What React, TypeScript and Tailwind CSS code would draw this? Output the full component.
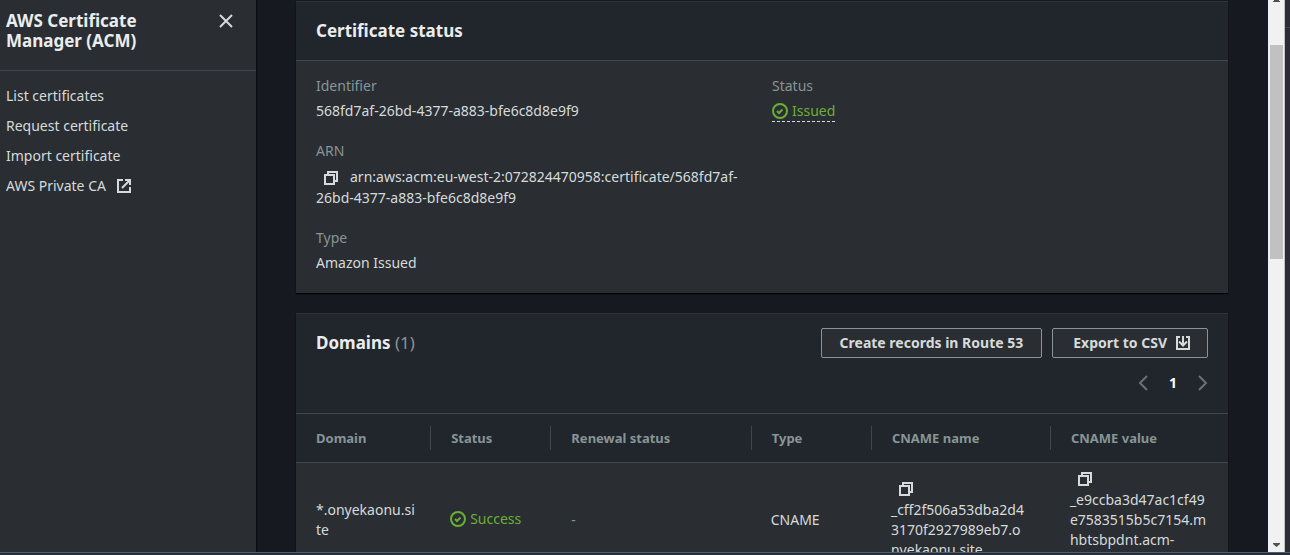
import type { ReactNode } from "react";

const records = [
  {
    domain: "*.onyekaonu.site",
    status: "Success",
    renewal: "-",
    type: "CNAME",
    name: "_cff2f506a53dba2d43170f2927989eb7.onyekaonu.site.",
    value: "_e9ccba3d47ac1cf49e7583515b5c7154.mhbtsbpdnt.acm-validations.aws.",
  },
];

const columns = [
  { label: "Domain", width: "w-[14.5%]" },
  { label: "Status", width: "w-[12.9%]" },
  { label: "Renewal status", width: "w-[21.5%]" },
  { label: "Type", width: "w-[12.9%]" },
  { label: "CNAME name", width: "w-[19.2%]" },
  { label: "CNAME value", width: "w-[19%]" },
];

function Icon({ children, className = "" }: { children: ReactNode; className?: string }) {
  return (
    <svg
      viewBox="0 0 16 16"
      className={`size-4 shrink-0 fill-none stroke-current stroke-2 ${className}`}
      aria-hidden="true"
    >
      {children}
    </svg>
  );
}

function CopyButton({ label }: { label: string }) {
  return (
    <button type="button" aria-label={label} className="ml-[7px] inline-flex align-middle text-[#d5dbdb]">
      <Icon>
        <path d="M2 5h9v9H2z" />
        <path d="M5 5V2h9v9h-3" />
      </Icon>
    </button>
  );
}

function Success({ children }: { children: ReactNode }) {
  return (
    <span className="inline-flex items-center gap-1 text-[#6aaf35]">
      <Icon>
        <circle cx="8" cy="8" r="7" />
        <path d="m5 8 2 2 3.5-3.5" />
      </Icon>
      {children}
    </span>
  );
}

function Field({ label, children }: { label: string; children: ReactNode }) {
  return (
    <div>
      <dt className="leading-5 text-[#879596]">{label}</dt>
      <dd className="mt-[5px]">{children}</dd>
    </div>
  );
}

function Sidebar() {
  return (
    <aside className="w-64 shrink-0 bg-[#2a2e33] shadow-[1px_0_1px_#0b0d10]">
      <div className="flex items-start justify-between border-b border-[#414750] pt-[11px] pr-[22px] pb-[19px] pl-1.5">
        <h2 className="w-40 text-[17px] leading-5 font-bold text-[#eaeded]">AWS Certificate Manager (ACM)</h2>
        <button type="button" aria-label="Close navigation" className="mt-0.5 text-[#d5dbdb]">
          <Icon>
            <path d="m2 2 12 12M14 2 2 14" />
          </Icon>
        </button>
      </div>
      <nav className="flex flex-col gap-2.5 px-1.5 py-[15px] leading-5">
        <a href="#list">List certificates</a>
        <a href="#request">Request certificate</a>
        <a href="#import">Import certificate</a>
        <a href="#private-ca" className="flex items-center gap-2.5">
          AWS Private CA
          <Icon>
            <path d="M7 2H2v12h12V9" />
            <path d="M9 2h5v5M14 2 6 10" />
          </Icon>
        </a>
      </nav>
    </aside>
  );
}

function StatusCard() {
  return (
    <section className="border-t border-[#2f3338] bg-[#2a2e33] shadow-[0_1px_1px_#000]">
      <header className="border-b border-[#414750] bg-[#21252c] px-5 py-[17px]">
        <h2 className="text-[17px] leading-6 font-bold text-[#eaeded]">Certificate status</h2>
      </header>
      <dl className="grid grid-cols-2 gap-x-5 px-5 pt-[15px] pb-5 leading-5">
        <div className="flex flex-col gap-5">
          <Field label="Identifier">568fd7af-26bd-4377-a883-bfe6c8d8e9f9</Field>
          <Field label="ARN">
            <div className="leading-[21px]">
              <CopyButton label="Copy ARN" />
              <span className="ml-[11px]">
                arn:aws:acm:eu-west-2:072824470958:certificate/568fd7af-26bd-4377-a883-bfe6c8d8e9f9
              </span>
            </div>
          </Field>
          <Field label="Type">Amazon Issued</Field>
        </div>
        <Field label="Status">
          <span className="inline-flex border-b border-dashed border-[#d5dbdb]">
            <Success>Issued</Success>
          </span>
        </Field>
      </dl>
    </section>
  );
}

const buttonClass =
  "flex h-[30px] items-center gap-2 rounded-[2px] border border-[#879596] bg-[#2a2e33] font-bold text-[#d5dbdb]";

function DomainsCard() {
  return (
    <section className="border-t border-[#2f3338] bg-[#21252c] shadow-[0_1px_1px_#000]">
      <header className="flex items-start justify-between px-5 pt-3.5">
        <h2 className="mt-[3px] text-[17px] leading-6 font-bold text-[#eaeded]">
          Domains <span className="font-normal text-[#879596]">(1)</span>
        </h2>
        <div className="flex gap-2.5">
          <button type="button" className={`${buttonClass} px-[18px]`}>
            Create records in Route 53
          </button>
          <button type="button" className={`${buttonClass} pr-4 pl-5`}>
            Export to CSV
            <Icon>
              <path d="M5 2H2v12h12V2h-3" />
              <path d="M8 1v9M4 6.5l4 4 4-4" />
            </Icon>
          </button>
        </div>
      </header>
      <nav aria-label="Pagination" className="flex items-center justify-end pt-[15px] pr-[17px] pb-5 leading-5">
        <button type="button" aria-label="Previous page" disabled className="text-[#687078]">
          <Icon>
            <path d="M12 1 5 8l7 7" />
          </Icon>
        </button>
        <button type="button" aria-current="page" className="w-11 text-center font-bold text-white">
          1
        </button>
        <button type="button" aria-label="Next page" disabled className="text-[#687078]">
          <Icon>
            <path d="m4 1 7 7-7 7" />
          </Icon>
        </button>
      </nav>
      <table className="w-full table-fixed border-collapse text-left">
        <thead>
          <tr className="border-y border-[#414750] text-[13px] text-[#879596]">
            {columns.map((column, index) => (
              <th key={column.label} scope="col" className={`${column.width} py-3 font-bold`}>
                <div
                  className={`px-5 leading-6 ${index < columns.length - 1 ? "border-r border-[#414750]" : ""}`}
                >
                  {column.label}
                </div>
              </th>
            ))}
          </tr>
        </thead>
        <tbody className="bg-[#2a2e33] leading-5">
          {records.map((record) => (
            <tr key={record.domain} className="wrap-anywhere">
              <td className="pt-[7px] pr-3 pb-[5px] pl-5 break-all">{record.domain}</td>
              <td className="pt-[7px] pb-[5px] pl-[19px]">
                <Success>{record.status}</Success>
              </td>
              <td className="px-5 pt-[7px] pb-[5px] text-[#879596]">{record.renewal}</td>
              <td className="pt-[7px] pb-[5px] pl-[19px]">{record.type}</td>
              <td className="pt-[7px] pr-6 pb-[5px] pl-[19px]">
                <div className="flex h-5 items-center pb-0.5">
                  <CopyButton label="Copy CNAME name" />
                </div>
                {record.name}
              </td>
              <td className="pt-[7px] pr-5 pb-[5px] pl-[19px]">
                <div className="flex h-5 items-center pb-0.5">
                  <CopyButton label="Copy CNAME value" />
                </div>
                {record.value}
              </td>
            </tr>
          ))}
        </tbody>
      </table>
    </section>
  );
}

function ScrollTrack() {
  return (
    <div className="flex w-4 shrink-0 flex-col items-center bg-[#f1f1f1]" aria-hidden="true">
      <svg viewBox="0 0 7 2" className="h-0.5 w-[7px] fill-[#505050]">
        <path d="M1 0h5v1h1v1H0V1h1z" />
      </svg>
      <div className="mt-[43px] h-[214px] w-[13px] bg-[#c1c1c1]" />
      <svg viewBox="0 0 7 4" className="mt-auto mb-[5px] h-1 w-[7px] fill-[#505050]">
        <path d="M0 0h7v1L3.5 4 0 1z" />
      </svg>
    </div>
  );
}

export default function App() {
  return (
    <div className="flex h-screen flex-col overflow-hidden bg-[#16191f] font-['Noto_Sans',sans-serif] text-sm text-[#d5dbdb]">
      <div className="flex min-h-0 flex-1">
        <Sidebar />
        <main className="flex min-w-0 flex-1 flex-col gap-5 overflow-hidden px-10 pt-px">
          <StatusCard />
          <DomainsCard />
        </main>
        <ScrollTrack />
        <div className="w-1.5 shrink-0 border-l border-[#c1c1c1] bg-[#2a2e33]">
          <div className="h-7 border-b border-[#414750]" />
        </div>
      </div>
      <footer className="h-[3px] shrink-0 border-t border-[#545b64] bg-[#232f3e]" />
    </div>
  );
}
